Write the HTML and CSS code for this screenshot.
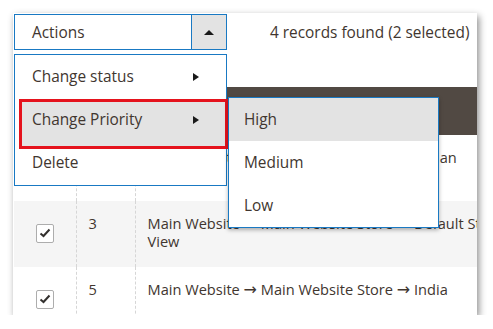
FILE: index.html
```html
<!DOCTYPE html>
<html lang="en">

<head>
    <meta charset="UTF-8">
    <meta name="viewport" content="width=device-width, initial-scale=1.0">
    <title>Mass Actions - Change Priority</title>
    <link rel="stylesheet" href="styles.css">
</head>

<body>
    <div class="shot">
        <div class="toolbar">
            <div class="actions">
                <span class="actions-label">Actions</span>
                <span class="actions-toggle"><span class="tri-up"></span></span>
            </div>
            <div class="records">4 records found (2 selected)</div>
        </div>

        <table class="grid">
            <tr class="grid-head">
                <th class="col-check"></th>
                <th class="col-id"></th>
                <th class="col-name"></th>
            </tr>
            <tr>
                <td class="col-check"><span class="check"></span></td>
                <td class="col-id">2</td>
                <td class="col-name">Main Website <span class="arr">→</span> Main Website Store <span class="arr">→</span> Indian<br>Store View</td>
            </tr>
            <tr class="odd">
                <td class="col-check">
                    <span class="check checked">
                        <svg viewBox="0 0 12 10" width="12" height="10"><polyline points="1.5,5.5 4.5,8 10.5,1.5" /></svg>
                    </span>
                </td>
                <td class="col-id">3</td>
                <td class="col-name">Main Website <span class="arr">→</span> Main Website Store <span class="arr">→</span> Default Store<br>View</td>
            </tr>
            <tr>
                <td class="col-check">
                    <span class="check checked">
                        <svg viewBox="0 0 12 10" width="12" height="10"><polyline points="1.5,5.5 4.5,8 10.5,1.5" /></svg>
                    </span>
                </td>
                <td class="col-id">5</td>
                <td class="col-name">Main Website <span class="arr">→</span> Main Website Store <span class="arr">→</span> India</td>
            </tr>
        </table>

        <!-- actions dropdown, opened -->
        <ul class="menu">
            <li><span>Change status</span><span class="tri-right"></span></li>
            <li class="marked"><span>Change Priority</span><span class="tri-right"></span></li>
            <li><span>Delete</span></li>
        </ul>

        <ul class="submenu">
            <li class="active">High</li>
            <li>Medium</li>
            <li>Low</li>
        </ul>
    </div>
</body>

</html>
```

FILE: styles.css
```css
* {
    margin: 0;
    padding: 0;
    box-sizing: border-box;
}

body {
    background: #ffffff;
    font-family: "Open Sans", sans-serif;
    font-size: 15.4px;
    color: #41362f;
}

.shot {
    position: relative;
    width: 464px;
    height: 302px;
    margin: 13px 0 0 13px;
    padding: 1px 0 0 1px;
    background: #ffffff;
    overflow: hidden;
    box-shadow: 2px 3px 7px rgba(0, 0, 0, 0.45);
}

.toolbar {
    display: flex;
    align-items: center;
    height: 36px;
}

.actions {
    display: flex;
    width: 213px;
    height: 36px;
    border: 1px solid #1979c3;
}

.actions-label {
    flex: 1;
    display: flex;
    align-items: center;
    padding-left: 17px;
    border-right: 1px solid #1979c3;
}

.actions-toggle {
    width: 34px;
    display: flex;
    align-items: center;
    justify-content: center;
    background: #e3e3e3;
}

.tri-up {
    width: 0;
    height: 0;
    border-left: 5px solid transparent;
    border-right: 5px solid transparent;
    border-bottom: 5px solid #1a1a1a;
}

.records {
    margin-left: 43px;
    white-space: nowrap;
}

/* grid behind the dropdown */
.grid {
    margin-top: 37px;
    width: 680px;
    border-collapse: collapse;
    table-layout: fixed;
    font-size: 14.6px;
}

.grid-head th {
    height: 48px;
    background: #514943;
}

.grid td {
    height: 66px;
    padding: 13px 12px 0;
    vertical-align: top;
    line-height: 18px;
    white-space: nowrap;
}

.arr {
    font-family: "DejaVu Sans", sans-serif;
    font-size: 16px;
    line-height: 14px;
}

.grid tr.odd td {
    background: #f5f5f5;
}

.col-check {
    width: 62px;
}

.col-id {
    width: 59px;
}

.grid td.col-id,
.grid td.col-name {
    border-left: 1px dashed #d6d6d6;
}

.grid td.col-check {
    padding: 22px 0 0;
    text-align: center;
}

.check {
    display: inline-flex;
    align-items: center;
    justify-content: center;
    width: 18px;
    height: 19px;
    border: 1px solid #adadad;
    border-radius: 2px;
    background: #ffffff;
}

.check svg polyline {
    fill: none;
    stroke: #33302e;
    stroke-width: 2;
}

/* dropdown */
.menu,
.submenu {
    position: absolute;
    list-style: none;
    background: #ffffff;
    border: 1px solid #1979c3;
}

.menu {
    top: 41px;
    left: 1px;
    width: 213px;
    height: 132px;
}

.menu li {
    position: relative;
    display: flex;
    align-items: center;
    justify-content: space-between;
    height: 43px;
    padding: 0 27px 0 17px;
}

.menu li span {
    position: relative;
    z-index: 1;
}

.menu li.marked::before {
    content: '';
    position: absolute;
    top: 1px;
    left: 4px;
    width: 203px;
    height: 44px;
    border: 3px solid #e5131d;
    background: #e3e3e3;
}

.tri-right {
    width: 0;
    height: 0;
    border-top: 4px solid transparent;
    border-bottom: 4px solid transparent;
    border-left: 6px solid #1a1a1a;
}

.submenu {
    top: 84px;
    left: 215px;
    width: 211px;
    height: 131px;
    box-shadow: 0 2px 4px rgba(0, 0, 0, 0.3);
}

.submenu li {
    display: flex;
    align-items: center;
    height: 43px;
    padding-left: 15px;
}

.submenu li.active {
    background: #e3e3e3;
}
```
